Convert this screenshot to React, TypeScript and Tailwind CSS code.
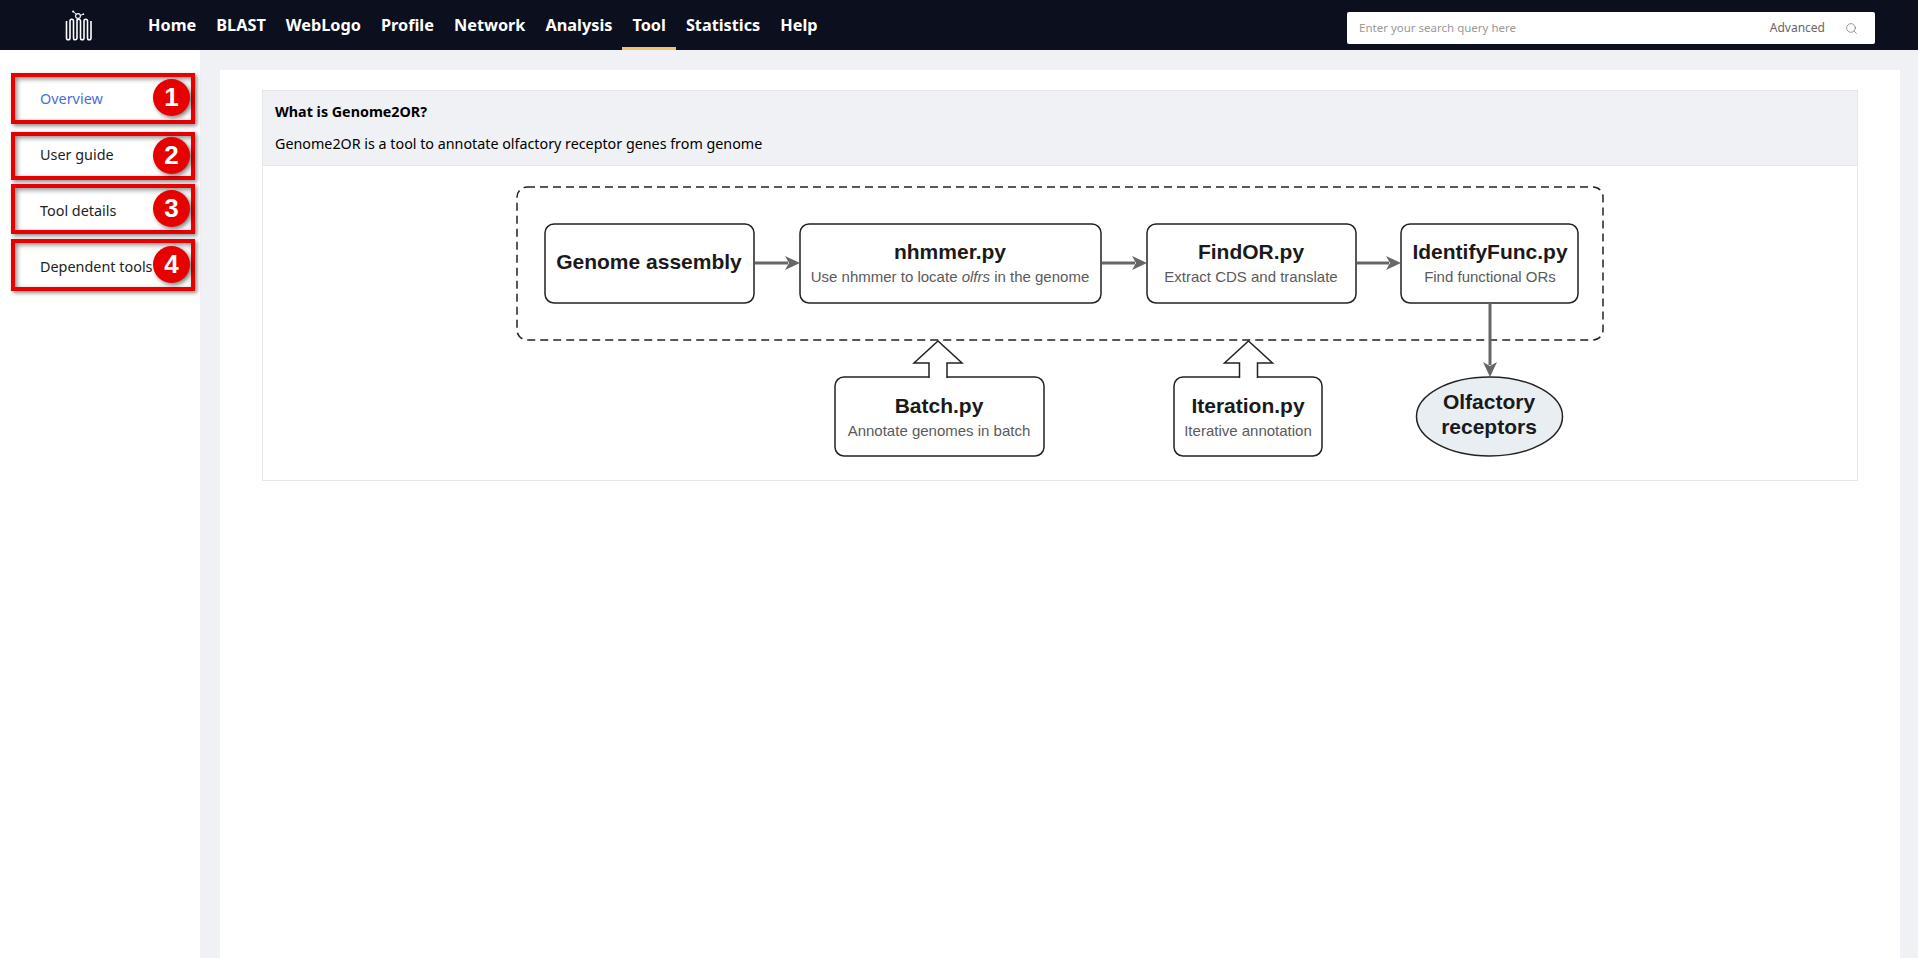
import React from 'react';
import { Search } from 'lucide-react';

const navItems = ['Home', 'BLAST', 'WebLogo', 'Profile', 'Network', 'Analysis', 'Tool', 'Statistics', 'Help'];

const sideItems = ['Overview', 'User guide', 'Tool details', 'Dependent tools'];

// red annotation marks drawn over the side menu
const marks = [
  { n: 1, box: 'top-[23px] h-[51px]', dot: 'top-[29px]' },
  { n: 2, box: 'top-[82px] h-[48px]', dot: 'top-[87px]' },
  { n: 3, box: 'top-[134px] h-[50px]', dot: 'top-[140px]' },
  { n: 4, box: 'top-[189px] h-[52px]', dot: 'top-[196px]' },
];

// meander of the seven transmembrane helices
const helix = (() => {
  const step = 3.5;
  let d = 'M1.5 11V28';
  for (let i = 1; i < 8; i++) {
    const x = 1.5 + i * step;
    d += i % 2 ? `A1.75 1.75 0 0 0 ${x} 28V11` : `A1.75 1.75 0 0 1 ${x} 11V28`;
  }
  return d;
})();

const Logo = () => (
  <svg width="30" height="32" viewBox="0 0 30 32" fill="none" stroke="#fff" className="block mt-[2px]">
    <path d={helix} strokeWidth="1.6" />
    <circle cx="13" cy="6" r="2.4" strokeWidth="1.1" />
    <path d="M11.3 4.4 8.6 1.8M15.4 5.4l2.6-1M12.5 8.4l-.8 1.8" strokeWidth="1" />
    <circle cx="8.2" cy="1.6" r="1.1" fill="#fff" stroke="none" />
    <circle cx="18.4" cy="4.2" r="0.9" fill="#fff" stroke="none" />
  </svg>
);

const Box = ({ x, y, w, h = 79 }: { x: number; y: number; w: number; h?: number }) => (
  <rect x={x} y={y} width={w} height={h} rx="9" fill="#fff" stroke="#222" strokeWidth="1.5" />
);

const Flow = ({ x1, y1, x2, y2 }: { x1: number; y1: number; x2: number; y2: number }) => {
  const horizontal = y1 === y2;
  return (
    <g>
      <line
        x1={x1}
        y1={y1}
        x2={horizontal ? x2 - 12 : x2}
        y2={horizontal ? y2 : y2 - 12}
        stroke="#666"
        strokeWidth="3"
      />
      {horizontal ? (
        <polygon points={`${x2},${y2} ${x2 - 15},${y2 - 7} ${x2 - 11},${y2} ${x2 - 15},${y2 + 7}`} fill="#666" />
      ) : (
        <polygon points={`${x2},${y2} ${x2 - 7},${y2 - 15} ${x2},${y2 - 11} ${x2 + 7},${y2 - 15}`} fill="#666" />
      )}
    </g>
  );
};

const BigArrow = ({ tip, half, stem }: { tip: number; half: number; stem: number }) => (
  <polyline
    points={`${tip + stem},378 ${tip + stem},363 ${tip + half},363 ${tip},341 ${tip - half},363 ${tip - stem},363 ${tip - stem},378`}
    fill="#fff"
    stroke="#222"
    strokeWidth="1.5"
  />
);

const Title = ({ x, y, children }: { x: number; y: number; children: React.ReactNode }) => (
  <text x={x} y={y} textAnchor="middle" fontSize="21" fontWeight="700" fill="#1a1a1a">
    {children}
  </text>
);

const Sub = ({ x, y, children }: { x: number; y: number; children: React.ReactNode }) => (
  <text x={x} y={y} textAnchor="middle" fontSize="15" fill="#5a5a5a">
    {children}
  </text>
);

const Diagram = () => (
  <svg
    viewBox="263 166 1594 314"
    width="1594"
    height="314"
    className="block"
    style={{ fontFamily: '"Liberation Sans", Arial, sans-serif' }}
  >
    <rect x="517" y="187" width="1086" height="153" rx="10" fill="none" stroke="#222" strokeWidth="1.5" strokeDasharray="8 5" />

    <Box x={545} y={224} w={209} />
    <Box x={800} y={224} w={301} />
    <Box x={1147} y={224} w={209} />
    <Box x={1401} y={224} w={177} />
    <Box x={835} y={377} w={209} />
    <Box x={1174} y={377} w={148} />

    <BigArrow tip={938} half={24} stem={9} />
    <BigArrow tip={1248.5} half={24} stem={9} />

    <Flow x1={755} y1={263} x2={800} y2={263} />
    <Flow x1={1102} y1={263} x2={1147} y2={263} />
    <Flow x1={1357} y1={263} x2={1401} y2={263} />
    <Flow x1={1490} y1={303} x2={1490} y2={377} />

    <ellipse cx="1489.5" cy="416.5" rx="73" ry="39.5" fill="#e9eef3" stroke="#222" strokeWidth="1.5" />

    <Title x={649} y={269}>Genome assembly</Title>
    <Title x={950} y={259}>nhmmer.py</Title>
    <Sub x={950} y={282}>
      Use nhmmer to locate <tspan fontStyle="italic">olfrs</tspan> in the genome
    </Sub>
    <Title x={1251} y={259}>FindOR.py</Title>
    <Sub x={1251} y={282}>Extract CDS and translate</Sub>
    <Title x={1490} y={259}>IdentifyFunc.py</Title>
    <Sub x={1490} y={282}>Find functional ORs</Sub>
    <Title x={939} y={413}>Batch.py</Title>
    <Sub x={939} y={436}>Annotate genomes in batch</Sub>
    <Title x={1248} y={413}>Iteration.py</Title>
    <Sub x={1248} y={436}>Iterative annotation</Sub>
    <Title x={1489} y={409}>Olfactory</Title>
    <Title x={1489} y={434}>receptors</Title>
  </svg>
);

const App: React.FC = () => {
  return (
    <div className="flex flex-col h-screen overflow-hidden bg-[#eff1f4] font-['Noto_Sans',sans-serif]">
      <header className="flex items-stretch h-[50px] shrink-0 bg-[#0b0f1e]">
        <div className="flex items-center w-[138px] pl-[65px] shrink-0">
          <Logo />
        </div>
        <nav className="flex items-stretch">
          {navItems.map((item) => (
            <a
              key={item}
              className={`flex items-center px-[10px] text-[16.3px] font-bold text-white border-y-[3px] border-t-transparent ${
                item === 'Tool' ? 'border-b-[#f3c36b]' : 'border-b-transparent'
              }`}
            >
              {item}
            </a>
          ))}
        </nav>
        <div className="flex items-center ml-auto mr-[43px] mt-[12px] mb-[6px] w-[528px] pl-[12px] pr-[17px] bg-white rounded-[2px]">
          <span className="flex-1 text-[11.5px] text-[#999]">Enter your search query here</span>
          <span className="text-[12px] text-[#666] mr-[20px]">Advanced</span>
          <Search size={13} strokeWidth={1.2} className="text-[#666]" />
        </div>
      </header>

      <div className="flex flex-1 min-h-0">
        <aside className="relative w-[200px] shrink-0 pt-[21px] bg-white">
          {sideItems.map((item, i) => (
            <div
              key={item}
              className={`flex items-center h-[56px] pl-[40px] text-[14.4px] ${i === 0 ? 'text-[#4a6fd6]' : 'text-[#222]'}`}
            >
              {item}
            </div>
          ))}
          {marks.map((m) => (
            <React.Fragment key={m.n}>
              <div
                className={`absolute left-[11px] w-[184px] border-[4px] border-[#e60000] shadow-[2px_2px_4px_rgba(0,0,0,0.45),inset_2px_2px_5px_rgba(0,0,0,0.45)] ${m.box}`}
              />
              <div
                className={`absolute left-[153px] flex items-center justify-center w-[37px] h-[37px] rounded-full bg-[#e60000] text-white text-[26px] font-black font-['Liberation_Sans',sans-serif] shadow-[2px_2px_4px_rgba(0,0,0,0.5)] ${m.dot}`}
              >
                {m.n}
              </div>
            </React.Fragment>
          ))}
        </aside>

        <main className="flex-1 min-w-0 pt-[20px] pl-[20px] pr-[18px]">
          <div className="h-full pt-[20px] px-[42px] bg-white">
            <div className="border border-[#e5e7eb]">
              <div className="h-[75px] px-[12px] pt-[10px] bg-[#eff1f4] border-b border-[#e5e7eb] text-[14.3px] text-black">
                <h3 className="font-bold leading-[22px]">What is Genome2OR?</h3>
                <p className="mt-[10px] leading-[22px]">Genome2OR is a tool to annotate olfactory receptor genes from genome</p>
              </div>
              <Diagram />
            </div>
          </div>
        </main>
      </div>
    </div>
  );
};

export default App;
